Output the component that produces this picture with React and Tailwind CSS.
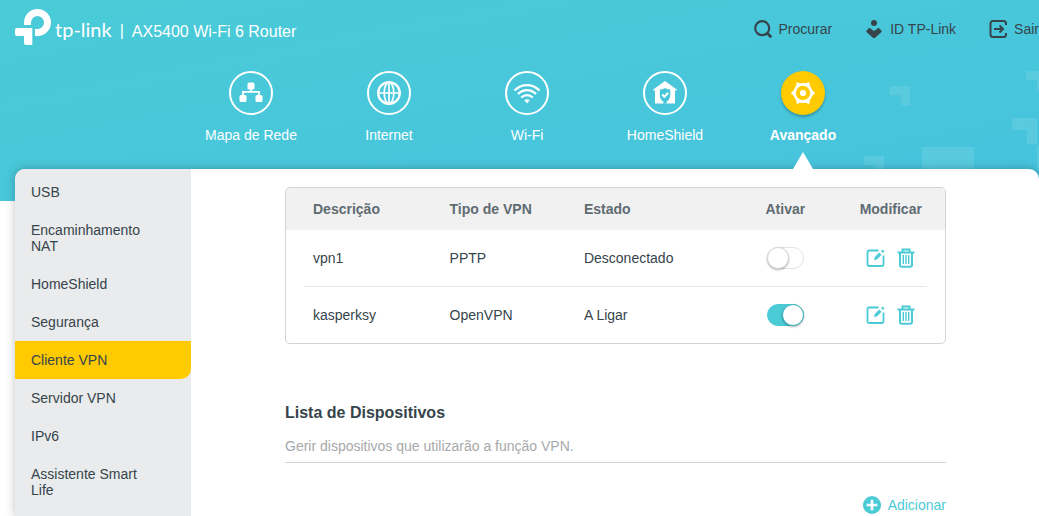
import { useState } from 'react'
import clsx from 'clsx'

const navItems = [
  { id: 'map', label: 'Mapa de Rede', icon: NetworkIcon },
  { id: 'internet', label: 'Internet', icon: GlobeIcon },
  { id: 'wifi', label: 'Wi-Fi', icon: WifiIcon },
  { id: 'shield', label: 'HomeShield', icon: HomeShieldIcon },
  { id: 'advanced', label: 'Avançado', icon: GearIcon },
]

const menuItems = [
  'USB',
  'Encaminhamento NAT',
  'HomeShield',
  'Segurança',
  'Cliente VPN',
  'Servidor VPN',
  'IPv6',
  'Assistente Smart Life',
]

const initialServers = [
  { name: 'vpn1', type: 'PPTP', status: 'Desconectado', enabled: false },
  { name: 'kasperksy', type: 'OpenVPN', status: 'A Ligar', enabled: true },
]

function Logo() {
  return (
    <svg width="36" height="36" viewBox="0 0 36 36" fill="#fff" aria-hidden="true">
      <path d="M9 16V13.5A13.5 13.5 0 1 1 22.5 27H20V20H22.5A6.5 6.5 0 1 0 16 13.5V16Z" />
      <path d="M2 19H17.3V36H11a2 2 0 0 1-2-2V27H2a2 2 0 0 1-2-2V21a2 2 0 0 1 2-2Z" />
    </svg>
  )
}

function SearchIcon() {
  return (
    <svg width="18" height="18" viewBox="0 0 18 18" fill="none" stroke="currentColor" strokeWidth="2.2" aria-hidden="true">
      <circle cx="8.2" cy="8.2" r="7" />
      <path d="M13 13l4.3 4.3" strokeWidth="2.8" />
    </svg>
  )
}

function CloudIdIcon() {
  return (
    <svg width="18" height="18" viewBox="0 0 18 18" fill="currentColor" aria-hidden="true">
      <circle cx="9" cy="3" r="3" />
      <path d="M4.3 7.8L9 11l4.700-3.200 2.800 2.900c.4.4.4.9 0 1.300L9.900 18c-.6.5-1.200.5-1.800 0L1.500 12c-.4-.4-.4-.9 0-1.300Z" />
    </svg>
  )
}

function LogoutIcon() {
  return (
    <svg width="18" height="18" viewBox="0 0 18 18" fill="none" stroke="currentColor" strokeWidth="2" aria-hidden="true">
      <path d="M17 5V3.5A2.5 2.5 0 0 0 14.5 1H4A2.5 2.5 0 0 0 1.5 3.5V14.5A2.5 2.5 0 0 0 4 17H14.5A2.5 2.5 0 0 0 17 14.5V13" />
      <path d="M5 9H14M10.5 5.5L14 9l-3.5 3.5" />
    </svg>
  )
}

function NetworkIcon() {
  return (
    <svg width="24" height="24" viewBox="0 0 24 24" fill="#fff" aria-hidden="true">
      <rect x="8.5" y="1.5" width="7" height="7" rx="1.5" />
      <rect x="0.5" y="14" width="7" height="7" rx="1.5" />
      <rect x="16.5" y="14" width="7" height="7" rx="1.5" />
      <path d="M12 8v3M4 15v-4.2h16V15" fill="none" stroke="#fff" strokeWidth="1.8" />
    </svg>
  )
}

function GlobeIcon() {
  return (
    <svg width="24" height="24" viewBox="0 0 24 24" fill="none" stroke="#fff" strokeWidth="1.7" aria-hidden="true">
      <circle cx="12" cy="12" r="10.8" strokeWidth="2.3" />
      <ellipse cx="12" cy="12" rx="4.8" ry="10.8" />
      <path d="M12 1v22M1 12h22" />
    </svg>
  )
}

function WifiIcon() {
  return (
    <svg width="28" height="24" viewBox="0 0 28 24" fill="none" stroke="#fff" strokeWidth="2.3" aria-hidden="true">
      <path d="M1.5 9.5C8.5 2.2 19.5 2.2 26.5 9.5" />
      <path d="M5 13C10.2 7.8 17.8 7.8 23 13" />
      <path d="M8.3 16.5C11.5 13.3 16.5 13.3 19.7 16.5" />
      <path d="M11.3 19.3c1.7-1.3 3.7-1.3 5.4 0L14 22.6Z" fill="#fff" stroke="none" />
    </svg>
  )
}

function HomeShieldIcon() {
  return (
    <svg width="24" height="24" viewBox="0 0 24 24" aria-hidden="true">
      <path d="M12 0L0.3 8.6v1H2V22.4h20V9.6h1.7v-1Z" fill="#fff" />
      <path d="M12 7c1.7 1 3.4 1.5 5.2 1.5v5.5c0 3.3-1.7 5.6-3.6 6.7v2h-3.2v-2c-1.9-1.1-3.6-3.4-3.6-6.7V8.5C8.6 8.5 10.3 8 12 7Z" fill="#48c6da" />
      <path d="M9.2 13.5l2.2 2.2 3.8-4" fill="none" stroke="#fff" strokeWidth="2" />
    </svg>
  )
}

function GearIcon() {
  return (
    <svg width="24" height="24" viewBox="0 0 24 24" aria-hidden="true">
      <path d="M6.7 2.7H17.3L22.5 12 17.3 21.3H6.7L1.5 12Z" fill="#fff" stroke="#fff" strokeLinejoin="round" />
      <g fill="#fff">
        <circle cx="6.7" cy="2.8" r="1.5" />
        <circle cx="17.3" cy="2.8" r="1.5" />
        <circle cx="22.3" cy="12" r="1.5" />
        <circle cx="17.3" cy="21.2" r="1.5" />
        <circle cx="6.7" cy="21.2" r="1.5" />
        <circle cx="1.7" cy="12" r="1.5" />
      </g>
      <circle cx="12" cy="12" r="7.2" fill="#ffca00" />
      <circle cx="12" cy="12" r="3.1" fill="#fff" />
    </svg>
  )
}

function EditIcon() {
  return (
    <svg width="20" height="20" viewBox="0 0 20 20" fill="none" stroke="currentColor" strokeWidth="1.8" aria-hidden="true">
      <path d="M12.5 2.5H3A1.5 1.5 0 0 0 1.500 4V16.5A1.5 1.5 0 0 0 3 18H16A1.500 1.500 0 0 0 17.500 16.500V7.500" />
      <path d="M8 12.200l.8-3.300L13.300 4.500l2.200 2.200L11.200 11.200Z" fill="currentColor" stroke="none" />
      <path d="M15 2.900l1.500-1.500 2 2-1.500 1.500Z" fill="currentColor" stroke="none" />
    </svg>
  )
}

function TrashIcon() {
  return (
    <svg width="20" height="20" viewBox="0 0 20 20" fill="none" stroke="currentColor" strokeWidth="2" aria-hidden="true">
      <path d="M1.500 4.5H18.500M6.500 4V1.500H13.500V4" />
      <path d="M4 4.500V17A1.700 1.700 0 0 0 5.700 18.700H14.300A1.700 1.700 0 0 0 16 17V4.500" />
      <path d="M7.300 7V16M10 7V16M12.700 7V16" strokeWidth="1.400" />
    </svg>
  )
}

function AddIcon() {
  return (
    <svg width="18" height="18" viewBox="0 0 18 18" aria-hidden="true">
      <circle cx="9" cy="9" r="9" fill="currentColor" />
      <path d="M9 3.7V14.3M3.7 9H14.3" stroke="#fff" strokeWidth="2.6" />
    </svg>
  )
}

function HeaderPattern() {
  return (
    <svg className="absolute right-0 top-0" width="180" height="201" viewBox="0 0 180 201" fill="#fff" fillOpacity="0.1" aria-hidden="true">
      <path d="M31 86H51V106H42V95H31Z" />
      <path d="M5 156H25V176H16V165H5Z" />
      <path d="M63 147H115V201H63Z" />
      <path d="M167 71H180V91H178V80H167Z" />
      <path d="M153 118H178V144H168V130H153Z" />
      <path d="M178 145H180V169H178Z" />
    </svg>
  )
}

function Header({ active, onSelect }) {
  return (
    <header className="relative bg-linear-to-br from-[#4acbd7] to-[#46c3de] pb-8 pl-[15px]">
      <HeaderPattern />
      <div className="relative flex h-[58px] items-center justify-between">
        <div className="flex items-center text-white">
          <a href="#" className="flex items-center gap-1 pb-1">
            <Logo />
            <span className="pt-1 font-['Lato',sans-serif] text-[20px] leading-6">tp-link</span>
          </a>
          <span className="ml-2 pt-1 text-base">|</span>
          <h1 className="ml-2 pt-1.5 text-base">AX5400 Wi-Fi 6 Router</h1>
        </div>
        <div className="flex gap-[33px] text-sm text-[#36444b]">
          <button className="flex items-center gap-[7px]">
            <SearchIcon />
            Procurar
          </button>
          <button className="flex items-center gap-[7px]">
            <CloudIdIcon />
            ID TP-Link
          </button>
          <button className="flex items-center gap-[7px]">
            <LogoutIcon />
            Sair
          </button>
        </div>
      </div>
      <nav className="relative z-10 flex justify-center pt-[13px] text-sm text-white">
        {navItems.map(({ id, label, icon: Icon }) => (
          <button key={id} onClick={() => onSelect(id)} className="flex w-[138px] flex-col items-center">
            <span
              className={clsx(
                'flex size-11 items-center justify-center rounded-full',
                id === active ? 'bg-[#ffca00] shadow-[0_2px_3px_rgba(0,0,0,0.25)]' : 'border-2 border-white'
              )}
            >
              <Icon />
            </span>
            <span className={clsx('mt-[10px] leading-5', id === active && 'font-bold')}>{label}</span>
            <span
              className={clsx(
                'mt-[7px] h-[17px] w-5 [clip-path:polygon(50%_0,100%_100%,0_100%)]',
                id === active && 'bg-white'
              )}
            />
          </button>
        ))}
      </nav>
    </header>
  )
}

function Sidebar({ active, onSelect }) {
  return (
    <aside className="w-44 shrink-0 rounded-tl-[10px] bg-[#e9ebed] pt-1">
      {menuItems.map((item) => (
        <button
          key={item}
          onClick={() => onSelect(item)}
          className={clsx(
            'block w-full py-[11px] pl-4 pr-12 text-left text-sm leading-4',
            item === active && 'rounded-br-[10px] bg-[#ffca00]'
          )}
        >
          {item}
        </button>
      ))}
    </aside>
  )
}

function VpnTable() {
  const [servers, setServers] = useState(initialServers)

  const toggle = (name) => {
    setServers(servers.map((s) => (s.name === name ? { ...s, enabled: !s.enabled } : s)))
  }

  return (
    <div className="overflow-hidden rounded-[5px] border border-[#d2d4d5]">
      <table className="w-full table-fixed text-left text-sm">
        <thead className="bg-[#f1f1f1] text-[#5f6b71]">
          <tr className="h-[42px]">
            <th className="w-[23%] pl-[27px]">Descrição</th>
            <th className="w-[21%] pl-3">Tipo de VPN</th>
            <th className="w-[24%] pl-2">Estado</th>
            <th className="w-[16%] pr-[3px] text-center">Ativar</th>
            <th className="w-[16%] pr-[3px] text-center">Modificar</th>
          </tr>
        </thead>
        <tbody>
          {servers.map((s, i) => (
            <tr
              key={s.name}
              className={
                i < servers.length - 1
                  ? 'h-[57px] bg-[linear-gradient(#e8e8e8,#e8e8e8)] bg-[length:calc(100%-36px)_1px] bg-bottom bg-no-repeat *:pb-px'
                  : 'h-14'
              }
            >
              <td className="pl-[27px]">{s.name}</td>
              <td className="pl-3">{s.type}</td>
              <td className="pl-2">{s.status}</td>
              <td className="pr-[3px]">
                <input
                  type="checkbox"
                  role="switch"
                  aria-label={`Ativar ${s.name}`}
                  checked={s.enabled}
                  onChange={() => toggle(s.name)}
                  className="mx-auto block h-[22px] w-[37px] appearance-none rounded-full border border-[#dfe3e5] bg-white before:-ml-px before:-mt-px before:block before:size-[22px] before:rounded-full before:border before:border-[#d3d8db] before:bg-white before:shadow-[0_1px_2px_rgba(0,0,0,0.3)] checked:border-[#4acbd6] checked:bg-[#4acbd6] checked:before:ml-[14px] checked:before:border-[#3fb5bf]"
                />
              </td>
              <td className="pr-[3px]">
                <div className="flex justify-center gap-[10px] text-[#4acbd6]">
                  <button aria-label={`Editar ${s.name}`}>
                    <EditIcon />
                  </button>
                  <button aria-label={`Eliminar ${s.name}`}>
                    <TrashIcon />
                  </button>
                </div>
              </td>
            </tr>
          ))}
        </tbody>
      </table>
    </div>
  )
}

export default function App() {
  const [section, setSection] = useState('advanced')
  const [page, setPage] = useState('Cliente VPN')

  return (
    <div className="flex min-h-screen flex-col overflow-hidden bg-white font-['Liberation_Sans',Arial,sans-serif] text-[#36444b]">
      <Header active={section} onSelect={setSection} />
      <div className="relative -mt-8 ml-[15px] flex flex-1 rounded-t-[10px] bg-white shadow-[0_0_10px_rgba(0,0,0,0.25)]">
        <Sidebar active={page} onSelect={setPage} />
        <main className="min-w-0 flex-1 pl-[94px] pr-[93px] pt-[18px]">
          <VpnTable />
          <section className="mt-[59px]">
            <h2 className="text-base font-bold leading-5">Lista de Dispositivos</h2>
            <p className="mt-[13px] border-b border-[#d2d4d5] pb-[6px] text-sm text-[#a6a9ab]">
              Gerir dispositivos que utilizarão a função VPN.
            </p>
            <div className="mt-8 flex justify-end">
              <button className="flex items-center gap-[7px] text-sm text-[#4acbd6]">
                <AddIcon />
                Adicionar
              </button>
            </div>
          </section>
        </main>
      </div>
    </div>
  )
}
